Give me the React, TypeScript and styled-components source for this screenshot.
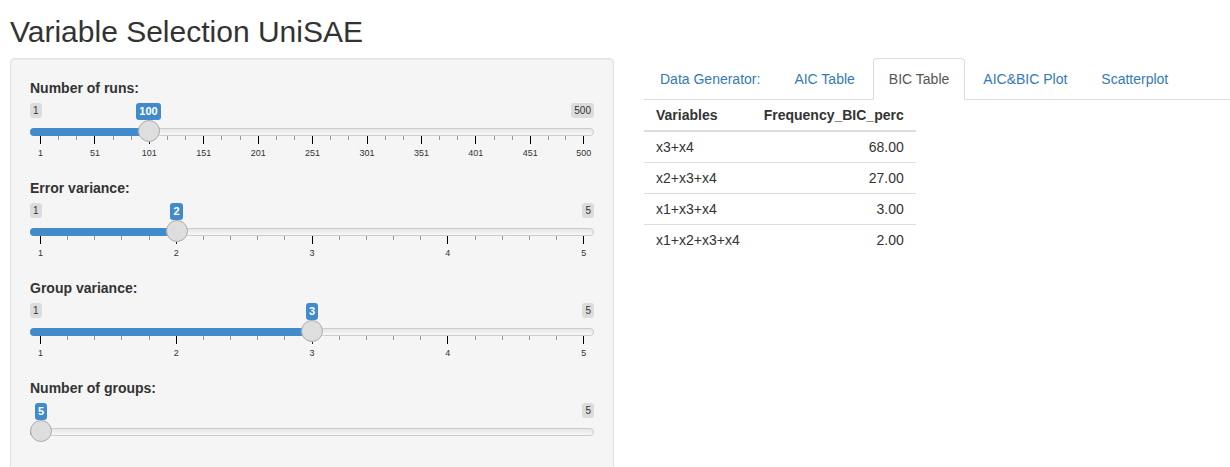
import React, { useId, useState } from "react";
import styled, { createGlobalStyle } from "styled-components";

const GlobalStyle = createGlobalStyle`
  *, *::before, *::after { box-sizing: border-box; }
  html { scrollbar-width: none; }
  body {
    margin: 0;
    background: #fff;
    color: #333;
    font-family: "Liberation Sans", Arial, Helvetica, sans-serif;
    font-size: 14px;
    line-height: 20px;
  }
`;

const Page = styled.div`
  padding: 15px 0 0 10px;
`;

const Title = styled.h2`
  margin: 0 0 10px;
  font-size: 30px;
  font-weight: 400;
  line-height: 33px;
`;

const Columns = styled.div`
  display: grid;
  grid-template-columns: minmax(0, 604fr) minmax(0, 586fr);
  gap: 30px;
  align-items: start;
`;

const Well = styled.form`
  padding: 19px;
  border: 1px solid #e3e3e3;
  border-radius: 4px;
  background: #f5f5f5;
  box-shadow: inset 0 1px 1px rgba(0, 0, 0, 0.05);
`;

const Group = styled.div`
  margin-bottom: 15px;
`;

const Label = styled.label`
  display: block;
  margin-bottom: 5px;
  font-weight: 700;
`;

const Slider = styled.div<{ $withGrid: boolean }>`
  position: relative;
  height: ${(p) => (p.$withGrid ? 60 : 40)}px;
`;

const Limits = styled.div`
  display: flex;
  justify-content: space-between;
  height: 25px;
  align-items: flex-start;
`;

const Limit = styled.span<{ $hidden?: boolean }>`
  padding: 1px 3px;
  border-radius: 3px;
  background: rgba(0, 0, 0, 0.1);
  color: #333;
  font-size: 10px;
  line-height: 13px;
  visibility: ${(p) => (p.$hidden ? "hidden" : "visible")};
`;

const Track = styled.div`
  height: 8px;
  border: 1px solid #ccc;
  border-radius: 8px;
  background: linear-gradient(to bottom, #dedede -50%, #fff 150%);
`;

const Fill = styled.div`
  height: 8px;
  margin: -1px 0 0 -1px;
  border-radius: 8px 0 0 8px;
  background: #428bca;
`;

const Range = styled.input`
  appearance: none;
  position: absolute;
  top: 17px;
  left: 0;
  width: 100%;
  height: 22px;
  margin: 0;
  background: transparent;
  cursor: pointer;

  &::-webkit-slider-thumb {
    appearance: none;
    width: 22px;
    height: 22px;
    border: 1px solid #ababab;
    border-radius: 50%;
    background: #dedede;
    box-shadow: 1px 1px 3px rgba(255, 255, 255, 0.3);
  }
`;

const BadgeRail = styled.div`
  position: absolute;
  top: 0;
  left: 11px;
  right: 11px;
  pointer-events: none;
`;

const BadgeAnchor = styled.div`
  display: flex;
  justify-content: flex-end;
`;

const BadgeCenter = styled.div`
  display: flex;
  justify-content: center;
  width: 0;
`;

const Badge = styled.output`
  flex: none;
  padding: 1px 3px;
  border-radius: 3px;
  background: #428bca;
  color: #fff;
  font-size: 11px;
  font-weight: 700;
  line-height: 15px;
`;

const Scale = styled.div`
  display: flex;
  margin: 0 10px;
`;

const Tick = styled.div<{ $grow: number; $major: boolean }>`
  flex: ${(p) => (p.$grow ? `${p.$grow} 0 0` : "0 0 1px")};
  min-width: 0;

  &::before {
    content: "";
    display: block;
    width: 1px;
    height: ${(p) => (p.$major ? 8 : 4)}px;
    background: ${(p) => (p.$major ? "#000" : "#999")};
  }
`;

const TickLabel = styled.span`
  display: flex;
  justify-content: center;
  width: 1px;
  margin-top: 3px;
  font-size: 9px;
  line-height: 12px;
`;

const Tabs = styled.nav`
  display: flex;
  gap: 2px;
  height: 42px;
  border-bottom: 1px solid #ddd;
`;

const Tab = styled.a<{ $active: boolean }>`
  height: 42px;
  padding: 10px 15px;
  border-width: 1px;
  border-style: solid;
  border-color: ${(p) => (p.$active ? "#ddd #ddd #fff" : "transparent")};
  border-radius: 4px 4px 0 0;
  background: ${(p) => (p.$active ? "#fff" : "transparent")};
  color: ${(p) => (p.$active ? "#555" : "#337ab7")};
  text-decoration: none;
  white-space: nowrap;
`;

const Table = styled.table`
  border-collapse: separate;
  border-spacing: 0;
`;

const HeadCell = styled.th<{ $align: "left" | "right" }>`
  padding: 5px 12px;
  border-bottom: 2px solid #ddd;
  text-align: ${(p) => p.$align};
`;

const Cell = styled.td<{ $align: "left" | "right" }>`
  padding: 5px 12px;
  border-bottom: 1px solid #ddd;
  text-align: ${(p) => p.$align};

  tr:last-child > & {
    border-bottom: 0;
  }
`;

type SliderProps = {
  label: string;
  min: number;
  max: number;
  initial: number;
  marks?: number[];
  minorTicks?: number;
};

function SliderInput({ label, min, max, initial, marks = [], minorTicks = 0 }: SliderProps) {
  const id = useId();
  const [value, setValue] = useState(initial);
  const ratio = max > min ? (value - min) / (max - min) : 0;

  const ticks = marks.flatMap((mark, i) => {
    const next = marks[i + 1];
    if (next === undefined) return [{ grow: 0, text: String(mark) }];
    const grow = (next - mark) / (minorTicks + 1);
    return Array.from({ length: minorTicks + 1 }, (_, k) => ({
      grow,
      text: k === 0 ? String(mark) : "",
    }));
  });

  return (
    <Group>
      <Label htmlFor={id}>{label}</Label>
      <Slider $withGrid={marks.length > 0}>
        <Limits>
          <Limit $hidden={ratio < 0.03}>{min}</Limit>
          <Limit $hidden={ratio > 0.97}>{max}</Limit>
        </Limits>
        <Track>
          <Fill style={{ width: `calc(11px + (100% - 22px) * ${ratio})` }} />
        </Track>
        {ticks.length > 0 && (
          <Scale aria-hidden="true">
            {ticks.map((tick, i) => (
              <Tick key={i} $grow={tick.grow} $major={tick.text !== ""}>
                {tick.text && <TickLabel>{tick.text}</TickLabel>}
              </Tick>
            ))}
          </Scale>
        )}
        <Range
          id={id}
          type="range"
          min={min}
          max={max}
          value={value}
          onChange={(e) => setValue(Number(e.target.value))}
        />
        <BadgeRail>
          <BadgeAnchor style={{ width: `${ratio * 100}%` }}>
            <BadgeCenter>
              <Badge htmlFor={id}>{value}</Badge>
            </BadgeCenter>
          </BadgeAnchor>
        </BadgeRail>
      </Slider>
    </Group>
  );
}

const runMarks = [1, 51, 101, 151, 201, 251, 301, 351, 401, 451, 500];
const varianceMarks = [1, 2, 3, 4, 5];
const tabNames = ["Data Generator:", "AIC Table", "BIC Table", "AIC&BIC Plot", "Scatterplot"];
const rows = [
  ["x3+x4", "68.00"],
  ["x2+x3+x4", "27.00"],
  ["x1+x3+x4", "3.00"],
  ["x1+x2+x3+x4", "2.00"],
];

export default function App() {
  const [active, setActive] = useState("BIC Table");

  return (
    <>
      <GlobalStyle />
      <Page>
        <Title>Variable Selection UniSAE</Title>
        <Columns>
          <Well>
            <SliderInput label="Number of runs:" min={1} max={500} initial={100} marks={runMarks} minorTicks={2} />
            <SliderInput label="Error variance:" min={1} max={5} initial={2} marks={varianceMarks} minorTicks={4} />
            <SliderInput label="Group variance:" min={1} max={5} initial={3} marks={varianceMarks} minorTicks={4} />
            <SliderInput label="Number of groups:" min={5} max={5} initial={5} />
          </Well>
          <main>
            <Tabs>
              {tabNames.map((name) => (
                <Tab
                  key={name}
                  href="#"
                  $active={name === active}
                  aria-current={name === active ? "page" : undefined}
                  onClick={(e) => {
                    e.preventDefault();
                    setActive(name);
                  }}
                >
                  {name}
                </Tab>
              ))}
            </Tabs>
            {active === "BIC Table" && (
              <Table>
                <thead>
                  <tr>
                    <HeadCell $align="left">Variables</HeadCell>
                    <HeadCell $align="right">Frequency_BIC_perc</HeadCell>
                  </tr>
                </thead>
                <tbody>
                  {rows.map(([variables, frequency]) => (
                    <tr key={variables}>
                      <Cell $align="left">{variables}</Cell>
                      <Cell $align="right">{frequency}</Cell>
                    </tr>
                  ))}
                </tbody>
              </Table>
            )}
          </main>
        </Columns>
      </Page>
    </>
  );
}
